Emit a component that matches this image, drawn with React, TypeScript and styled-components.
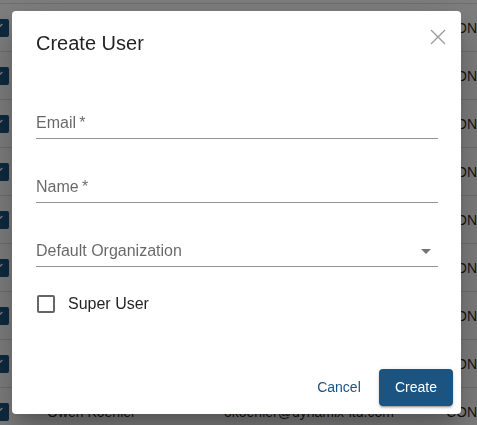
import React from 'react';
import styled, { createGlobalStyle } from 'styled-components';

const GlobalStyle = createGlobalStyle`
  html, body {
    margin: 0;
    padding: 0;
    background: #ffffff;
    font-family: 'Liberation Sans', Arial, sans-serif;
    overflow: hidden;
  }
`;

interface UserRow {
  name: string;
  email: string;
  role: string;
}

const users: UserRow[] = [
  { name: 'Ava Thompson', email: 'athompson@dynamix-ltd.com', role: 'CONTRIBUTOR' },
  { name: 'Liam Carter', email: 'lcarter@dynamix-ltd.com', role: 'CONTRIBUTOR' },
  { name: 'Mia Hernandez', email: 'mhernandez@dynamix-ltd.com', role: 'CONTRIBUTOR' },
  { name: 'Noah Patel', email: 'npatel@dynamix-ltd.com', role: 'CONTRIBUTOR' },
  { name: 'Emma Rossi', email: 'erossi@dynamix-ltd.com', role: 'CONTRIBUTOR' },
  { name: 'Lucas Meyer', email: 'lmeyer@dynamix-ltd.com', role: 'CONTRIBUTOR' },
  { name: 'Sofia Nguyen', email: 'snguyen@dynamix-ltd.com', role: 'CONTRIBUTOR' },
  { name: 'Ethan Brooks', email: 'ebrooks@dynamix-ltd.com', role: 'CONTRIBUTOR' },
  { name: 'Owen Koehler', email: 'okoehler@dynamix-ltd.com', role: 'CONTRIBUTOR' },
];

// table behind the dialog, scrolled a little to the right
const TableViewport = styled.div`
  width: 100vw;
  overflow: hidden;
`;

const Table = styled.div`
  display: flex;
  flex-direction: column;
  padding-top: 3px;
  margin-left: -9px;
`;

const Row = styled.div`
  display: grid;
  grid-template-columns: 56px 177px 222px 1fr;
  align-items: center;
  height: 48px;
  border-top: 1px solid #e0e0e0;
  box-sizing: border-box;
  font-size: 14px;
  color: rgba(0, 0, 0, 0.87);
  white-space: nowrap;
  overflow: hidden;
`;

const RowCheck = styled.span`
  width: 18px;
  height: 18px;
  border-radius: 2px;
  background: #1b5480;
  display: flex;
  align-items: center;
  justify-content: center;
  margin-top: 1px;
`;

const Backdrop = styled.div`
  position: fixed;
  inset: 0;
  background: rgba(0, 0, 0, 0.5);
  display: flex;
  align-items: center;
  justify-content: center;
  padding-right: 4px;
`;

const Dialog = styled.div`
  position: relative;
  width: 449px;
  background: #ffffff;
  border-radius: 4px;
  box-shadow: 0px 11px 15px -7px rgba(0, 0, 0, 0.2), 0px 24px 38px 3px rgba(0, 0, 0, 0.14),
    0px 9px 46px 8px rgba(0, 0, 0, 0.12);
  display: flex;
  flex-direction: column;
  color: rgba(0, 0, 0, 0.87);
`;

const Title = styled.h2`
  margin: 0;
  padding: 16px 24px;
  font-size: 20px;
  font-weight: 400;
  line-height: 32px;
`;

const CloseButton = styled.button`
  position: absolute;
  top: 18px;
  right: 15px;
  width: 16px;
  height: 16px;
  padding: 0;
  border: none;
  background: transparent;
  display: flex;
  cursor: pointer;
`;

const Content = styled.div`
  display: flex;
  flex-direction: column;
  gap: 16px;
  padding: 16px 23px 36px 24px;
`;

const Field = styled.div`
  height: 48px;
  box-sizing: border-box;
  padding-top: 16px;
`;

const InputArea = styled.div`
  height: 32px;
  box-sizing: border-box;
  border-bottom: 1px solid rgba(0, 0, 0, 0.42);
  display: flex;
  align-items: flex-start;
  justify-content: space-between;
  padding-top: 4px;
`;

const Label = styled.label`
  font-size: 16px;
  line-height: 23px;
  color: rgba(0, 0, 0, 0.6);
`;

const DropIcon = styled.svg`
  width: 24px;
  height: 24px;
  fill: rgba(0, 0, 0, 0.54);
`;

const CheckRow = styled.label`
  height: 42px;
  display: flex;
  align-items: center;
  gap: 13px;
  font-size: 16px;
  color: rgba(0, 0, 0, 0.87);
`;

const CheckBox = styled.span`
  width: 18px;
  height: 18px;
  box-sizing: border-box;
  margin-left: 1px;
  border: 2px solid rgba(0, 0, 0, 0.6);
  border-radius: 2px;
`;

const Actions = styled.div`
  display: flex;
  justify-content: flex-end;
  align-items: center;
  gap: 8px;
  padding: 8px;
`;

const Button = styled.button<{ $primary?: boolean }>`
  font-family: inherit;
  font-size: 14px;
  line-height: 25px;
  min-width: 64px;
  height: 37px;
  border: none;
  border-radius: 4px;
  cursor: pointer;
  padding: ${(p) => (p.$primary ? '6px 16px' : '6px 8px')};
  background: ${(p) => (p.$primary ? '#1b5480' : 'transparent')};
  color: ${(p) => (p.$primary ? '#ffffff' : '#1b5480')};
  box-shadow: ${(p) =>
    p.$primary
      ? '0px 3px 1px -2px rgba(0,0,0,0.2), 0px 2px 2px 0px rgba(0,0,0,0.14), 0px 1px 5px 0px rgba(0,0,0,0.12)'
      : 'none'};
`;

const App = () => {
  return (
    <>
      <GlobalStyle />
      <TableViewport>
        <Table>
          {users.map((u) => (
            <Row key={u.email}>
              <RowCheck>
                <svg width="14" height="14" viewBox="0 0 24 24">
                  <path d="M4 17 L16 5" stroke="#ffffff" strokeWidth="2.6" fill="none" />
                </svg>
              </RowCheck>
              <span>{u.name}</span>
              <span>{u.email}</span>
              <span>{u.role}</span>
            </Row>
          ))}
        </Table>
      </TableViewport>
      <Backdrop>
        <Dialog role="dialog">
          <Title>Create User</Title>
          <CloseButton aria-label="close">
            <svg width="16" height="16" viewBox="0 0 16 16">
              <path d="M1 1 L15 15 M15 1 L1 15" stroke="#9a9a9a" strokeWidth="1.3" fill="none" />
            </svg>
          </CloseButton>
          <Content>
            <Field>
              <InputArea>
                <Label>Email&thinsp;*</Label>
              </InputArea>
            </Field>
            <Field>
              <InputArea>
                <Label>Name&thinsp;*</Label>
              </InputArea>
            </Field>
            <Field>
              <InputArea>
                <Label>Default Organization</Label>
                <DropIcon viewBox="0 0 24 24">
                  <path d="M7 10l5 5 5-5z" />
                </DropIcon>
              </InputArea>
            </Field>
            <CheckRow>
              <CheckBox />
              Super User
            </CheckRow>
          </Content>
          <Actions>
            <Button>Cancel</Button>
            <Button $primary>Create</Button>
          </Actions>
        </Dialog>
      </Backdrop>
    </>
  );
};

export default App;
